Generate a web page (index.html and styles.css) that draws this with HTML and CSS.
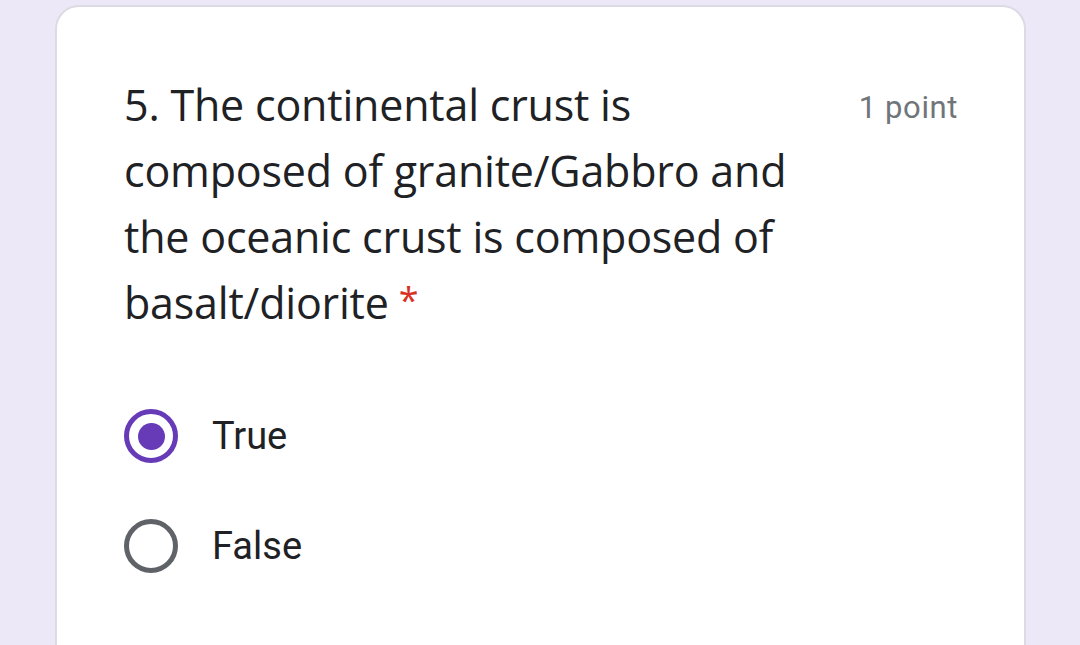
FILE: index.html
```html
<!DOCTYPE html>
<html>
<head>
<meta charset="utf-8">
<link rel="stylesheet" href="styles.css">
</head>
<body>
<div class="card">
  <div class="head">
    <div class="question">5. The continental crust is composed of granite/Gabbro and the oceanic crust is composed of basalt/diorite<span class="req">*</span></div>
    <div class="points">1 point</div>
  </div>
  <div class="options">
    <div class="option">
      <span class="radio checked"><span class="dot"></span></span>
      <span class="label">True</span>
    </div>
    <div class="option">
      <span class="radio"></span>
      <span class="label">False</span>
    </div>
  </div>
</div>
</body>
</html>
```
FILE: styles.css
```css
html, body {
  margin: 0;
  padding: 0;
  height: 100%;
  overflow: hidden;
}
body {
  background: #ede8f7;
  padding-top: 5px;
  box-sizing: border-box;
}
.card {
  margin-left: 55px;
  width: 971px;
  height: 700px;
  box-sizing: border-box;
  background: #ffffff;
  border: 2px solid #dcdae3;
  border-radius: 24px;
  padding: 65px 66px 0 67px;
}
.head {
  display: flex;
  justify-content: space-between;
  align-items: flex-start;
}
.question {
  width: 680px;
  font-family: "Open Sans", sans-serif;
  font-size: 43px;
  line-height: 66px;
  color: #202124;
  letter-spacing: -0.2px;
}
.req {
  display: inline-block;
  margin-left: 10px;
  color: #d93025;
  font-size: 36px;
  line-height: 30px;
  vertical-align: 6px;
}
.points {
  font-family: Roboto, sans-serif;
  font-size: 31px;
  letter-spacing: 0.6px;
  color: #70757a;
  line-height: 66px;
  margin-top: 3px;
}
.options {
  margin-top: 73px;
  display: flex;
  flex-direction: column;
  gap: 56px;
}
.option {
  display: flex;
  align-items: center;
  gap: 34px;
}
.radio {
  width: 54px;
  height: 54px;
  box-sizing: border-box;
  border: 5px solid #5f6368;
  border-radius: 50%;
  display: flex;
  align-items: center;
  justify-content: center;
}
.radio.checked {
  border-color: #673ab7;
}
.dot {
  width: 27px;
  height: 27px;
  border-radius: 50%;
  background: #673ab7;
}
.label {
  font-family: Roboto, sans-serif;
  font-size: 38px;
  color: #202124;
  line-height: 54px;
}
```
